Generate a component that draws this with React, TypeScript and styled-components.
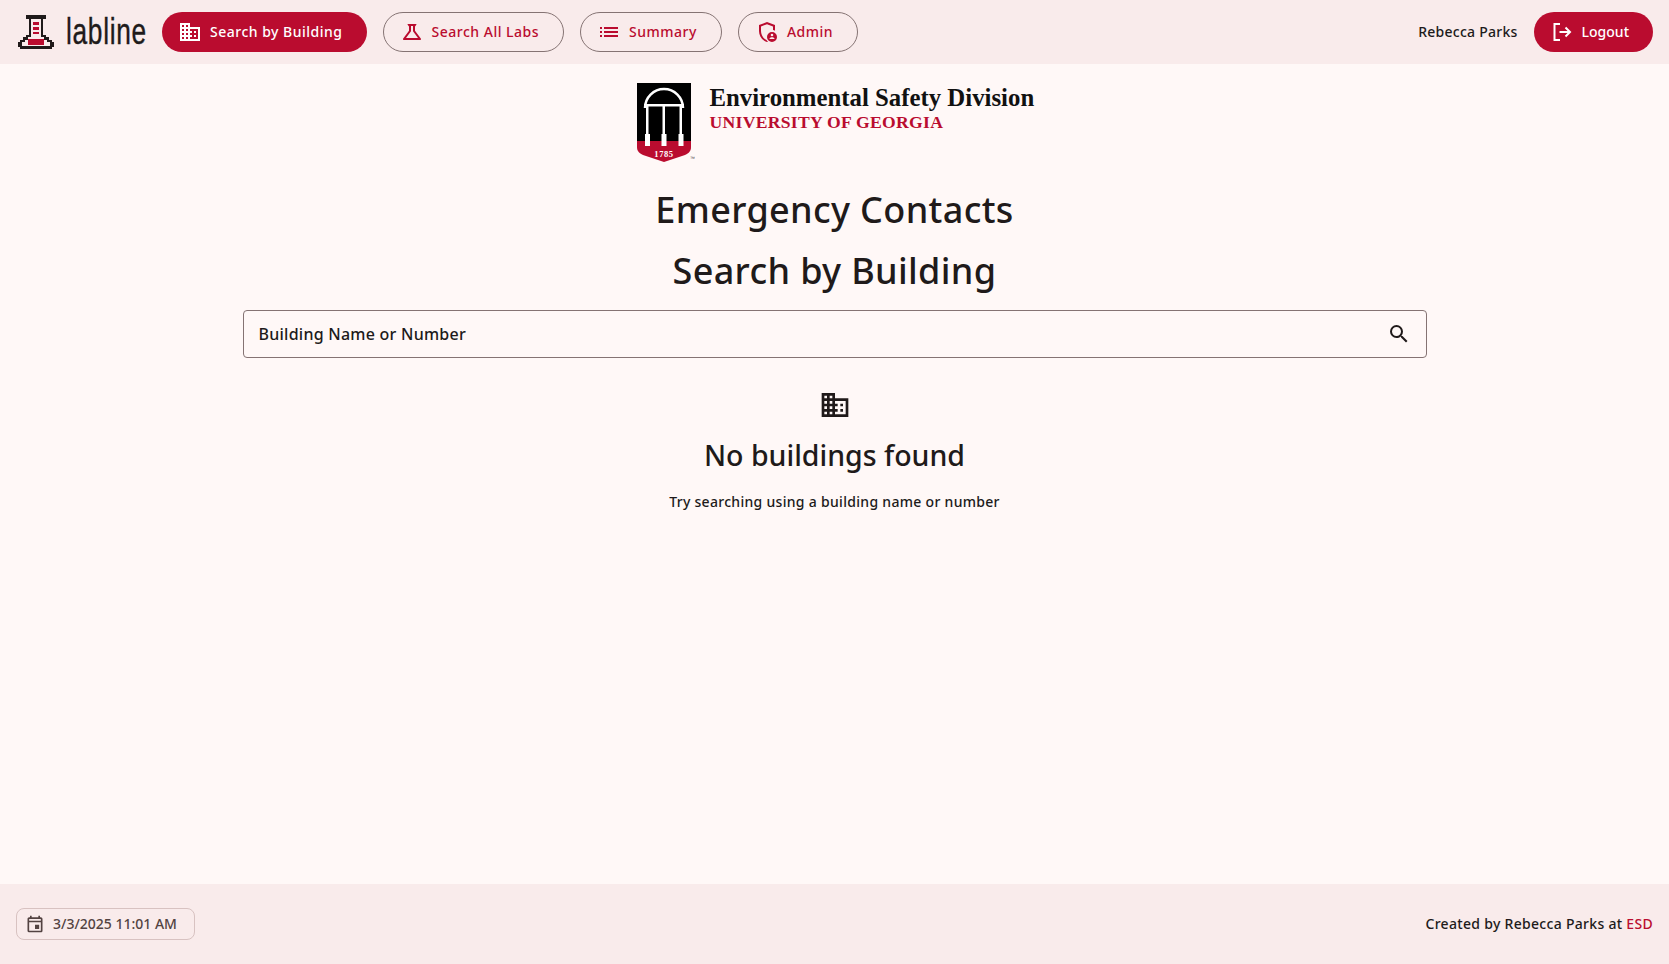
import React from "react";
import styled, { createGlobalStyle } from "styled-components";
import { MdDomain, MdOutlineScience, MdList, MdSearch, MdOutlineEvent } from "react-icons/md";

const RED = "#ba0c2f";
const INK = "#201a1a";
const LINE = "#857373";
const FONT = `"Noto Sans", "Open Sans", sans-serif`;

const Global = createGlobalStyle`
  html, body { margin: 0; padding: 0; background: #fff8f7; }
  body { font-family: ${FONT}; color: ${INK}; }
  * { box-sizing: border-box; }
`;

const Page = styled.div`
  min-height: 964px;
  height: 100vh;
  display: flex;
  flex-direction: column;
`;

const TopBar = styled.header`
  height: 64px;
  flex: none;
  background: #f9ebeb;
  display: flex;
  align-items: center;
  padding: 0 16px;
  gap: 16px;
`;

const Brand = styled.div`
  display: flex;
  align-items: center;
  gap: 12px;
  width: 130px;
  padding-left: 2px;
  svg { flex: none; display: block; }
`;

const BrandName = styled.span`
  font-family: "Liberation Sans", sans-serif;
  font-size: 37px;
  line-height: 44px;
  letter-spacing: 1px;
  color: ${INK};
  display: inline-block;
  -webkit-text-stroke: 0.4px ${INK};
  transform: scaleX(0.71);
  transform-origin: left center;
`;

const NavButton = styled.button<{ $filled?: boolean; $plain?: boolean }>`
  height: 40px;
  border-radius: 20px;
  border: ${(p) => (p.$filled ? "none" : `1px solid ${LINE}`)};
  background: ${(p) => (p.$filled ? RED : "transparent")};
  color: ${(p) => (p.$filled ? "#fff" : RED)};
  font-family: ${FONT};
  font-size: 14px;
  font-weight: 500;
  letter-spacing: ${(p) => (p.$plain ? "0" : "0.5px")};
  padding: 0 24px 0 16px;
  display: flex;
  align-items: center;
  gap: 8px;
  white-space: nowrap;
  svg { width: 24px; height: 24px; flex: none; }
`;

const NavLabel = styled.span`
  margin-top: -2px;
`;

const Spacer = styled.div`
  flex: 1;
`;

const UserName = styled.span`
  font-size: 14px;
  letter-spacing: 0.25px;
  font-weight: 500;
  color: ${INK};
  margin-top: -1px;
`;

const Main = styled.main`
  flex: 1;
  display: flex;
  flex-direction: column;
  align-items: center;
`;

const Letterhead = styled.div`
  margin: 19px 0 0 2px;
  display: flex;
  align-items: flex-start;
  gap: 15px;
  width: 398px;
  height: 95px;
  svg { flex: none; display: block; }
`;

const LetterText = styled.div`
  display: flex;
  flex-direction: column;
  padding-top: 1px;
`;

const DivisionName = styled.span`
  font-family: "Liberation Serif", serif;
  font-weight: 700;
  font-size: 24.8px;
  line-height: 28px;
  color: #111;
  white-space: nowrap;
`;

const UniversityName = styled.span`
  font-family: "Liberation Serif", serif;
  font-weight: 700;
  font-size: 17.6px;
  line-height: 20px;
  letter-spacing: 0.3px;
  color: ${RED};
  white-space: nowrap;
`;

const Title = styled.h1`
  margin: 0;
  font-size: 36px;
  line-height: 44px;
  font-weight: 500;
  letter-spacing: 0.35px;
  color: ${INK};
  text-align: center;
`;

const TitleStack = styled.div`
  margin-top: 10px;
  display: flex;
  flex-direction: column;
  gap: 17px;
`;

const SearchField = styled.div`
  margin-top: 17px;
  width: 1184px;
  height: 48px;
  border: 1px solid ${LINE};
  border-radius: 4px;
  display: flex;
  align-items: center;
  justify-content: space-between;
  padding: 0 15px;
  font-size: 16px;
  font-weight: 500;
  letter-spacing: 0.25px;
  color: ${INK};
  svg { width: 24px; height: 24px; }
`;

const Empty = styled.div`
  margin-top: 31px;
  display: flex;
  flex-direction: column;
  align-items: center;
  svg { width: 32px; height: 32px; display: block; }
`;

const EmptyTitle = styled.div`
  margin-top: 14px;
  font-size: 28.5px;
  line-height: 40px;
  font-weight: 500;
`;

const EmptyHint = styled.div`
  margin-top: 17px;
  font-size: 14px;
  line-height: 20px;
  font-weight: 500;
  letter-spacing: 0.3px;
`;

const Footer = styled.footer`
  height: 80px;
  flex: none;
  background: #f9ebeb;
  display: flex;
  align-items: center;
  justify-content: space-between;
  padding: 0 16px;
  font-size: 14px;
  font-weight: 500;
`;

const DateChip = styled.div`
  height: 32px;
  width: 179px;
  border: 1px solid #d8c2c1;
  border-radius: 8px;
  display: flex;
  align-items: center;
  gap: 8px;
  padding: 0 8px;
  color: #534342;
  white-space: nowrap;
  svg { width: 20px; height: 20px; flex: none; }
`;

const DateText = styled.span`
  margin-top: -2px;
`;

const Credit = styled.div`
  color: ${INK};
  letter-spacing: 0.3px;
  margin-top: -1px;
`;

const CreditLink = styled.span`
  color: ${RED};
`;

const LogoMark = () => (
  <svg width="36" height="34" viewBox="0 0 36 34" shapeRendering="crispEdges" aria-hidden="true">
    <path fill={INK} d="M8 0h20v4h-3v16h3v2h3v3h3v2h2v5h-2v2H2v-2H0v-5h2v-2h3v-3h3v-2h3V4H8z" />
    <path fill="#f9ebeb" d="M13 4h10v18h3v3h3v2h3v4H4v-4h3v-2h3v-3h3z" />
    <path fill={RED} d="M15 7h6v3h-6zM15 12h6v3h-6zM15 17h6v2h-6zM10 24h16v6H10z" />
  </svg>
);

const Shield = () => (
  <svg width="58" height="80" viewBox="0 0 58 80" aria-hidden="true">
    <path fill="#000" d="M0 0h54v58H0z" />
    <path fill={RED} d="M0 58h54v6c0 4-2 6-6 8L27 79 6 72c-4-2-6-4-6-8z" />
    <path fill="none" stroke="#fff" strokeWidth="2.500" d="M8 25a19 19 0 0 1 38 0" />
    <path fill="#fff" d="M7 21h40v2.500H7zM9 23h2.500v28H9zM25.500 23H28v28h-2.500zM42.500 23H45v28h-2.500zM8 51h5v12H8zM24.500 51h5v12h-5zM41.500 51h5v12h-5z" />
    <text x="27" y="74" textAnchor="middle" fontFamily="Liberation Serif, serif" fontSize="8.500" fontWeight="700" letterSpacing="0.6" fill="#fff">1785</text>
    <text x="53" y="77" fontFamily="Liberation Sans, sans-serif" fontSize="5" fill="#444">™</text>
  </svg>
);

const AdminIcon = () => (
  <svg viewBox="0 0 24 24" aria-hidden="true">
    <path fill="currentColor" d="M12 2 4 5v6.100c0 5 3.400 9.700 8 10.900.4-.1.800-.2 1.100-.4a7 7 0 0 1-1.600-1.700C8.500 18.700 6 15.100 6 11.100V6.400l6-2.250 6 2.250v3.700c.7.100 1.400.3 2 .6V5z" />
    <path fill="currentColor" fillRule="evenodd" d="M17 12a5 5 0 1 0 0 10 5 5 0 0 0 0-10zm0 1.700a1.300 1.300 0 1 1 0 2.600 1.300 1.300 0 0 1 0-2.600zM14.500 18.500c.5-.8 1.500-1.200 2.500-1.200s2 .4 2.500 1.200v.6h-5z" />
  </svg>
);

const LogoutIcon = () => (
  <svg viewBox="0 0 24 24" aria-hidden="true">
    <path fill="none" stroke="currentColor" strokeWidth="2" d="M10 4H4.500v16H10M9.500 12H20M15.500 7.500 20 12l-4.500 4.500" />
  </svg>
);

export default function App() {
  return (
    <>
      <Global />
      <Page>
        <TopBar>
          <Brand>
            <LogoMark />
            <BrandName>labline</BrandName>
          </Brand>
          <NavButton $filled><MdDomain /><NavLabel>Search by Building</NavLabel></NavButton>
          <NavButton><MdOutlineScience /><NavLabel>Search All Labs</NavLabel></NavButton>
          <NavButton><MdList /><NavLabel>Summary</NavLabel></NavButton>
          <NavButton><AdminIcon /><NavLabel>Admin</NavLabel></NavButton>
          <Spacer />
          <UserName>Rebecca Parks</UserName>
          <NavButton $filled $plain><LogoutIcon /><NavLabel>Logout</NavLabel></NavButton>
        </TopBar>
        <Main>
          <Letterhead>
            <Shield />
            <LetterText>
              <DivisionName>Environmental Safety Division</DivisionName>
              <UniversityName>UNIVERSITY OF GEORGIA</UniversityName>
            </LetterText>
          </Letterhead>
          <TitleStack>
            <Title>Emergency Contacts</Title>
            <Title>Search by Building</Title>
          </TitleStack>
          <SearchField>
            <span>Building Name or Number</span>
            <MdSearch />
          </SearchField>
          <Empty>
            <MdDomain />
            <EmptyTitle>No buildings found</EmptyTitle>
            <EmptyHint>Try searching using a building name or number</EmptyHint>
          </Empty>
        </Main>
        <Footer>
          <DateChip><MdOutlineEvent /><DateText>3/3/2025 11:01 AM</DateText></DateChip>
          <Credit>Created by Rebecca Parks at <CreditLink>ESD</CreditLink></Credit>
        </Footer>
      </Page>
    </>
  );
}
